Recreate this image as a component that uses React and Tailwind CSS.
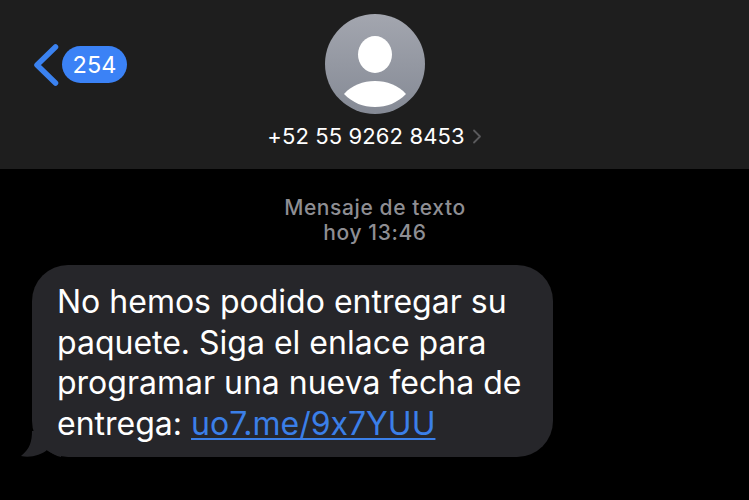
export default function App() {
  return (
    <div className="w-[749px] h-[500px] overflow-hidden bg-black flex flex-col font-['Inter','Liberation_Sans',sans-serif] [font-feature-settings:'calt'_0]">
      <header className="h-[169px] shrink-0 bg-[#1e1e1e] grid grid-cols-[1fr_auto_1fr]">
        <div className="flex items-center gap-[2px] pl-[32px] pb-[40px]">
          <svg width="28" height="42" viewBox="0 0 28 42" fill="none">
            <path d="M23.5 3 L5 21 L23.5 39" stroke="#3b82f0" strokeWidth="5.5" strokeLinecap="round" strokeLinejoin="round" />
          </svg>
          <div className="h-[37px] w-[65px] rounded-full bg-[#3b82f6] text-white text-[23.5px] flex items-center justify-center">254</div>
        </div>
        <div className="flex flex-col items-center pt-[14px] pl-[1px]">
          <svg width="100" height="100" viewBox="0 0 100 100">
            <defs>
              <linearGradient id="av" x1="0" y1="0" x2="0" y2="1">
                <stop offset="0" stopColor="#a3a6af" />
                <stop offset="1" stopColor="#858a95" />
              </linearGradient>
            </defs>
            <circle cx="50" cy="50" r="50" fill="url(#av)" />
            <ellipse cx="50" cy="40.5" rx="17" ry="18.5" fill="#fff" />
            <path d="M19 80 C27 71 38 67 50 67 C62 67 73 71 81 80 C72 89 62 93 50 93 C38 93 28 89 19 80 Z" fill="#fff" />
          </svg>
          <div className="mt-[9px] flex items-center gap-[7px] text-white text-[22px] leading-[26px] whitespace-nowrap tracking-[0.12px]">
            <span>+52 55 9262 8453</span>
            <svg width="11" height="15" viewBox="0 0 11 15" fill="none">
              <path d="M2 1.5 L8 7.5 L2 13.5" stroke="#5a5a5c" strokeWidth="1.8" strokeLinecap="round" strokeLinejoin="round" />
            </svg>
          </div>
        </div>
        <div />
      </header>
      <main className="flex-1 flex flex-col">
        <div className="pt-[26px] pl-[1px] text-center text-[#8e8e93] text-[21px] leading-[25px] font-medium tracking-[0.6px]">
          <div>Mensaje de texto</div>
          <div>hoy 13:46</div>
        </div>
        <div className="relative mt-[20px] ml-[32px] w-[521px] h-[192px] rounded-[36px] bg-[#26262a] pl-[25px] pt-[17px] text-white text-[32px] leading-[40.5px] whitespace-nowrap">
          <svg className="absolute left-[-11px] bottom-0" width="40" height="26" viewBox="0 0 40 26">
            <path d="M11 0 C11 10 9 18 0 25 C10 27 20 24 26 19 C30 22 35 25 40 26 L40 0 Z" fill="#26262a" />
          </svg>
          <div className="relative">
            No hemos podido entregar su<br />
            paquete. Siga el enlace para<br />
            programar una nueva fecha de<br />
            entrega: <span className="text-[#3b7fe8] underline decoration-[2px] underline-offset-[3px]">uo7.me/9x7YUU</span>
          </div>
        </div>
      </main>
    </div>
  );
}
